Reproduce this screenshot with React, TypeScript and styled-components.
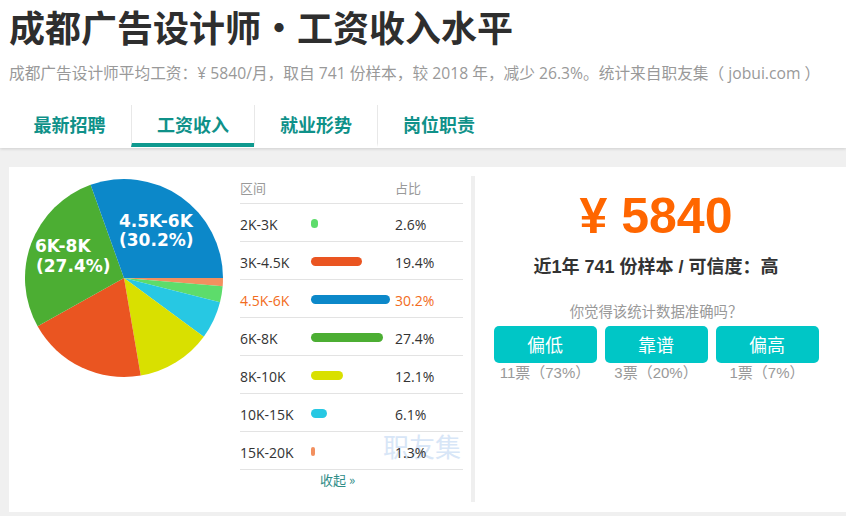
import * as React from "react"
import styled, { createGlobalStyle } from "styled-components"

const GlobalStyle = createGlobalStyle`
  html, body {
    margin: 0;
    padding: 0;
    background: #f0f0f0;
  }
  body {
    font-family: "Liberation Sans", "Noto Sans CJK SC", sans-serif;
    color: #333;
  }
`

type Row = { range: string; pct: number; color: string; hot?: boolean }

const rows: Row[] = [
  { range: "2K-3K", pct: 2.6, color: "#5ddc6b" },
  { range: "3K-4.5K", pct: 19.4, color: "#ea5521" },
  { range: "4.5K-6K", pct: 30.2, color: "#0c88c9", hot: true },
  { range: "6K-8K", pct: 27.4, color: "#4cae33" },
  { range: "8K-10K", pct: 12.1, color: "#d9e000" },
  { range: "10K-15K", pct: 6.1, color: "#27c8e3" },
  { range: "15K-20K", pct: 1.3, color: "#f2905f" },
]

// clockwise from 3 o'clock, as the chart draws them
const pieOrder = [6, 0, 5, 4, 1, 3, 2]

const tabs = ["最新招聘", "工资收入", "就业形势", "岗位职责"]

const votes = [
  { label: "偏低", count: "11票（73%）" },
  { label: "靠谱", count: "3票（20%）" },
  { label: "偏高", count: "1票（7%）" },
]

function slicePath(cx: number, cy: number, r: number, a0: number, a1: number) {
  const rad = (a: number) => (a * Math.PI) / 180
  const x0 = cx + r * Math.cos(rad(a0))
  const y0 = cy + r * Math.sin(rad(a0))
  const x1 = cx + r * Math.cos(rad(a1))
  const y1 = cy + r * Math.sin(rad(a1))
  const large = a1 - a0 > 180 ? 1 : 0
  return `M${cx},${cy} L${x0},${y0} A${r},${r} 0 ${large} 1 ${x1},${y1} Z`
}

function Pie() {
  const total = rows.reduce((s, r) => s + r.pct, 0)
  let angle = 0
  const slices = pieOrder.map((i) => {
    const row = rows[i]
    const sweep = (row.pct / total) * 360
    const d = slicePath(115, 111, 99, angle, angle + sweep)
    angle += sweep
    return <path key={row.range} d={d} fill={row.color} />
  })
  return (
    <PieSvg width="231" height="230" viewBox="0 0 231 230">
      {slices}
      <PieLabel x="110" y="60">4.5K-6K</PieLabel>
      <PieLabel x="110" y="79">(30.2%)</PieLabel>
      <PieLabel x="26" y="85">6K-8K</PieLabel>
      <PieLabel x="27" y="105">(27.4%)</PieLabel>
    </PieSvg>
  )
}

export default function App() {
  return (
    <>
      <GlobalStyle />
      <Header>
        <Title>
          成都广告设计师<Dot>•</Dot>工资收入水平
        </Title>
        <Subtitle>
          成都广告设计师平均工资：¥ 5840/月，取自 741 份样本，较 2018 年，减少 26.3%。统计来自职友集（ jobui.com ）
        </Subtitle>
        <Tabs>
          {tabs.map((t, i) => (
            <Tab key={t} $active={i === 1} $first={i === 0}>
              {t}
            </Tab>
          ))}
        </Tabs>
      </Header>
      <Main>
        <Card>
          <PieCol>
            <Pie />
          </PieCol>
          <Table>
            <Watermark>职友集</Watermark>
            <HeadRow>
              <span>区间</span>
              <span />
              <span>占比</span>
            </HeadRow>
            {rows.map((r) => (
              <DataRow key={r.range} $hot={r.hot}>
                <span>{r.range}</span>
                <BarCell>
                  <Bar $color={r.color} style={{ width: Math.max(4, r.pct * 2.62) }} />
                </BarCell>
                <span>{r.pct}%</span>
              </DataRow>
            ))}
            <Collapse>收起 »</Collapse>
          </Table>
          <Divider />
          <Summary>
            <Price>¥ 5840</Price>
            <Sample>近1年 741 份样本 / 可信度：高</Sample>
            <Question>你觉得该统计数据准确吗？</Question>
            <Votes>
              {votes.map((v) => (
                <VoteCol key={v.label}>
                  <VoteButton>{v.label}</VoteButton>
                  <VoteCount>{v.count}</VoteCount>
                </VoteCol>
              ))}
            </Votes>
          </Summary>
        </Card>
      </Main>
    </>
  )
}

const Header = styled.div`
  background: #fff;
  padding: 0 0 1px;
  box-shadow: 0 1px 3px rgba(0, 0, 0, 0.14);
  position: relative;
`

const Title = styled.h1`
  margin: 0 0 0 9px;
  font: bold 36px/52px "Noto Sans CJK SC", sans-serif;
  color: #2e2e2e;
  white-space: nowrap;
`

const Dot = styled.span`
  display: inline-block;
  width: 36px;
  text-align: center;
`

const Subtitle = styled.div`
  margin: 10px 0 0 9px;
  font: 15.7px/22px "Open Sans", "Noto Sans CJK SC", sans-serif;
  color: #999;
  white-space: nowrap;
`

const Tabs = styled.div`
  display: flex;
  margin: 21px 0 0 8px;
`

const Tab = styled.div<{ $active?: boolean; $first?: boolean }>`
  box-sizing: border-box;
  width: 123px;
  height: 42px;
  text-align: center;
  font: bold 18px/38px "Noto Sans CJK SC", sans-serif;
  color: #0f9189;
  border-left: ${(p) => (p.$first ? "none" : "1px solid #e8e8e8")};
  border-bottom: 4px solid ${(p) => (p.$active ? "#0f9a8f" : "transparent")};
`

const Main = styled.div`
  padding: 19px 0 4px 9px;
`

const Card = styled.div`
  display: flex;
  align-items: flex-start;
  height: 345px;
  background: #fff;
`

const PieCol = styled.div`
  width: 231px;
  flex: none;
`

const PieSvg = styled.svg`
  display: block;
`

const PieLabel = styled.text`
  font: bold 17px "DejaVu Sans", sans-serif;
  fill: #fff;
`

const Table = styled.div`
  position: relative;
  width: 223px;
  flex: none;
  margin-top: 5px;
  font-family: "Open Sans", "Noto Sans CJK SC", sans-serif;
`

const HeadRow = styled.div`
  position: relative;
  display: grid;
  grid-template-columns: 71px 84px 1fr;
  height: 31px;
  line-height: 31px;
  font-size: 13px;
  color: #999;
  border-bottom: 1px solid #e3e3e3;
  font-family: "Noto Sans CJK SC", sans-serif;
`

const DataRow = styled.div<{ $hot?: boolean }>`
  position: relative;
  display: grid;
  grid-template-columns: 71px 84px 1fr;
  align-items: center;
  box-sizing: border-box;
  height: 38px;
  padding-top: 3px;
  font-size: 14px;
  color: ${(p) => (p.$hot ? "#f26b21" : "#333")};
  border-bottom: 1px solid #e3e3e3;
`

const BarCell = styled.div`
  display: flex;
  align-items: center;
  margin-top: -2px;
`

const Bar = styled.div<{ $color: string }>`
  height: 9px;
  border-radius: 5px;
  background: ${(p) => p.$color};
`

const Collapse = styled.div`
  padding-left: 80px;
  line-height: 20px;
  font-size: 13px;
  color: #2f8d87;
  font-family: "Noto Sans CJK SC", sans-serif;
`

const Watermark = styled.div`
  position: absolute;
  left: 143px;
  top: 259px;
  font: 26px/30px "Noto Sans CJK SC", sans-serif;
  color: #d8e6f7;
  white-space: nowrap;
  pointer-events: none;
`

const Divider = styled.div`
  flex: none;
  width: 4px;
  height: 326px;
  margin: 9px 0 0 8px;
  background: #efefef;
`

const Summary = styled.div`
  width: 362px;
  flex: none;
  display: flex;
  flex-direction: column;
  align-items: center;
  padding-top: 24px;
`

const Price = styled.div`
  font: bold 50px/50px "Liberation Sans", sans-serif;
  color: #ff6600;
`

const Sample = styled.div`
  margin-top: 14px;
  font: bold 18px/24px "Liberation Sans", "Noto Sans CJK SC", sans-serif;
  color: #333;
`

const Question = styled.div`
  margin-top: 23px;
  font: 14.4px/20px "Liberation Sans", "Noto Sans CJK SC", sans-serif;
  color: #999;
`

const Votes = styled.div`
  display: flex;
  gap: 8px;
  margin-top: 4px;
`

const VoteCol = styled.div`
  display: flex;
  flex-direction: column;
  align-items: center;
`

const VoteButton = styled.div`
  width: 103px;
  height: 37px;
  border-radius: 5px;
  background: #00c6c6;
  color: #fff;
  font: 18px/37px "Noto Sans CJK SC", sans-serif;
  text-align: center;
`

const VoteCount = styled.div`
  margin-top: 1px;
  font: 15px/18px "Liberation Sans", "Noto Sans CJK SC", sans-serif;
  color: #999;
`
